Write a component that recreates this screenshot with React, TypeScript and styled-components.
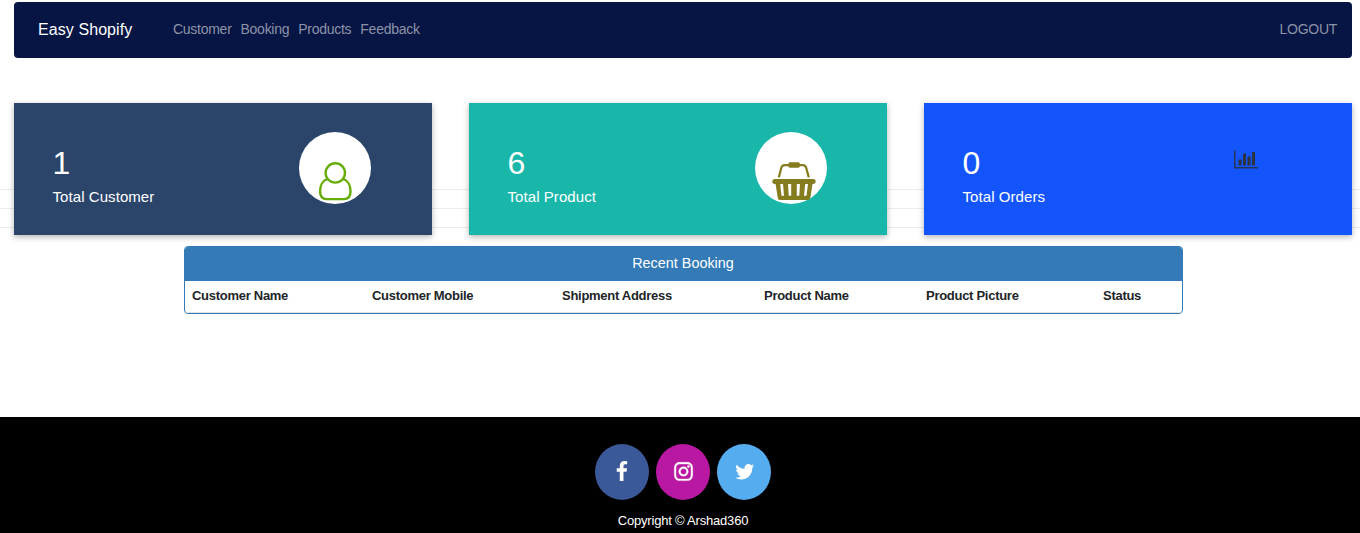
import React from "react";
import styled, { createGlobalStyle } from "styled-components";
import { FaInstagram } from "react-icons/fa";

const GlobalStyle = createGlobalStyle`
  *, *::before, *::after { box-sizing: border-box; }
  body {
    margin: 0;
    background: #fff;
    font-family: "Liberation Sans", Arial, sans-serif;
    color: #212529;
    overflow: hidden;
  }
`;

const Page = styled.div`
  height: 533px;
  display: flex;
  flex-direction: column;
  padding-top: 2px;
`;

const Navbar = styled.nav`
  flex: none;
  height: 56px;
  margin: 0 8px 0 14px;
  padding: 0 15px 0 24px;
  display: flex;
  align-items: center;
  background: #061543;
  border-radius: 4px;
`;

const Brand = styled.a`
  width: 135px;
  font-size: 16px;
  line-height: 24px;
  letter-spacing: 0.08px;
  color: #fff;
`;

const NavLinks = styled.div`
  flex: 1;
  display: flex;
  gap: 9px;
`;

const NavLink = styled.a`
  font-size: 14px;
  line-height: 20px;
  margin-top: -2px;
  letter-spacing: -0.27px;
  color: #8c93a8;
`;

const Stats = styled.section`
  flex: none;
  display: grid;
  margin-top: 45px;
  height: 132px;
`;

const Rules = styled.div`
  grid-area: 1 / 1;
  padding-top: 86px;
  display: flex;
  flex-direction: column;
  gap: 18px;
`;

const Rule = styled.div`
  height: 1px;
  background: #ececec;
`;

const Cards = styled.div`
  grid-area: 1 / 1;
  z-index: 1;
  display: grid;
  grid-template-columns: 418px 418px 428px;
  column-gap: 37px;
  margin-left: 14px;
`;

const Card = styled.article<{ $color: string }>`
  display: flex;
  justify-content: space-between;
  padding: 29px 61px 0 38.5px;
  background: ${(p) => p.$color};
  box-shadow: 0 2px 6px rgba(0, 0, 0, 0.3);
  color: #fff;
`;

const Figures = styled.div`
  padding-top: 11px;
`;

const Count = styled.div`
  font-size: 32px;
  line-height: 40px;
`;

const Label = styled.div`
  margin-top: 3px;
  font-size: 15px;
  line-height: 22px;
  letter-spacing: 0.07px;
`;

const Disc = styled.div<{ $shift?: number; $nudge?: number }>`
  width: 72px;
  height: 72px;
  margin-right: ${(p) => -(p.$shift ?? 0)}px;
  border-radius: 50%;
  background: #fff;
  display: flex;
  justify-content: center;
  padding: 30px 0 0 ${(p) => p.$nudge ?? 0}px;
  svg { display: block; flex: none; overflow: visible; }
`;

const ChartSlot = styled.div`
  padding: 17px 33px 0 0;
  svg { display: block; }
`;

const Panel = styled.section`
  flex: none;
  width: 999px;
  height: 68px;
  margin: 11px 0 0 184px;
  border: 1px solid #337ab7;
  border-radius: 4px;
  overflow: hidden;
`;

const PanelTitle = styled.h2`
  margin: 0;
  padding-right: 1px;
  height: 34px;
  background: #337ab7;
  color: #fff;
  font-size: 14.4px;
  font-weight: 400;
  line-height: 32px;
  text-align: center;
`;

const Table = styled.table`
  width: 997px;
  height: 32px;
  table-layout: fixed;
  border-collapse: collapse;
`;

const Th = styled.th<{ $w: number }>`
  width: ${(p) => p.$w}px;
  padding: 0 0 1px 7px;
  border-bottom: 1px solid #dee2e6;
  text-align: left;
  font-size: 13px;
  line-height: 18px;
  letter-spacing: -0.28px;
  white-space: nowrap;
`;

const Footer = styled.footer`
  flex: 1;
  margin-top: 103px;
  padding: 27px 0 0 6px;
  background: #000;
  display: flex;
  flex-direction: column;
  align-items: center;
`;

const Socials = styled.div`
  display: flex;
  gap: 7px;
`;

const Social = styled.a<{ $color: string; $nudge?: number }>`
  width: 54px;
  height: 56px;
  border-radius: 50%;
  background: ${(p) => p.$color};
  color: #fff;
  display: flex;
  align-items: center;
  justify-content: center;
  padding: 0 0 1px ${(p) => p.$nudge ?? 0}px;
`;

const InstagramIcon = styled(FaInstagram)`
  stroke: #fff;
  stroke-width: 10px;
`;

const Copyright = styled.p`
  margin: 12px 0 0;
  color: #fff;
  font-size: 13px;
  line-height: 18px;
  letter-spacing: -0.2px;
`;

const UserIcon = () => (
  <svg width="33" height="39" viewBox="0 0 33 39" fill="none" stroke="#66ad0a" strokeWidth="2.4">
    <circle cx="16.3" cy="10.9" r="9.7" />
    <path d="M8.4 17.2C3.7 18.4 1.1 23.4 1.1 29.4C1.1 34.6 3.4 37.1 7.6 37.1H25C29.2 37.1 31.5 34.6 31.5 29.4C31.5 23.4 28.9 18.4 24.2 17.2" />
  </svg>
);

const BasketIcon = () => (
  <svg width="44" height="39" viewBox="0 0 44 39">
    <path d="M6.8 15.4L9.3 5.8Q10 3.1 12.7 3.1H30.8Q33.5 3.1 34.2 5.8L36.8 15.4" fill="none" stroke="#857b1f" strokeWidth="2.2" />
    <rect x="16.3" y="0.2" width="11.6" height="5.6" rx="1.8" fill="#857b1f" />
    <path
      fillRule="evenodd"
      fill="#857b1f"
      d="M2.5 17H41.2Q43.7 17 43.7 19.5Q43.7 21.9 41.2 22H40.5L38.3 36Q38 38 36 38H8Q6 38 5.8 36L3.6 22H2.5Q.2 21.9.2 19.5Q.2 17 2.5 17ZM8.2 22L9.5 33.8H12L11 22ZM16 22L16.7 33.8H19.2V22ZM24.8 22V33.8H27.3L28 22ZM33.2 22L32 33.8H34.5L36 22Z"
    />
  </svg>
);

const ChartIcon = () => (
  <svg width="24" height="21" viewBox="0 0 2048 1792" fill="#253557">
    <path d="M0 128h128v1408h1920v128H0z" />
    <path fill="#2b3440" d="M640 896v512H384V896zM1024 384v1024H768V384zM1408 640v768h-256V640zM1792 256v1152h-256V256z" />
  </svg>
);

const FacebookIcon = () => (
  <svg width="21.5" height="21.5" viewBox="0 0 1792 1792" fill="currentColor">
    <path d="M1343 12v264h-157q-86 0-116 36t-30 108v189h293l-39 296h-254v759h-306v-759h-255v-296h255v-218q0-186 104-288.5t277-102.5q147 0 228 12z" />
  </svg>
);

const TwitterIcon = () => (
  <svg width="21.5" height="21.5" viewBox="0 0 1792 1792" fill="currentColor">
    <path d="M1684 408q-67 98-162 167 1 14 1 42 0 130-38 259.5t-115.5 248.5-184.5 210.5-258 146-323 54.5q-271 0-496-145 35 4 78 4 225 0 401-138-105-2-188-64.5t-114-159.5q33 5 61 5 43 0 85-11-112-23-185.5-111.5t-73.5-205.5v-4q68 38 146 41-66-44-105-115t-39-154q0-88 44-163 121 149 294.5 238.5t371.5 99.5q-8-38-8-74 0-134 94.5-228.5t228.5-94.5q140 0 236 102 109-21 205-78-37 115-142 178 93-10 186-50z" />
  </svg>
);

const columns: [string, number][] = [
  ["Customer Name", 180],
  ["Customer Mobile", 190],
  ["Shipment Address", 202],
  ["Product Name", 162],
  ["Product Picture", 177],
  ["Status", 86],
];

export default function App() {
  return (
    <Page>
      <GlobalStyle />
      <Navbar>
        <Brand>Easy Shopify</Brand>
        <NavLinks>
          {["Customer", "Booking", "Products", "Feedback"].map((name) => (
            <NavLink key={name}>{name}</NavLink>
          ))}
        </NavLinks>
        <NavLink>LOGOUT</NavLink>
      </Navbar>

      <Stats>
        <Rules>
          <Rule />
          <Rule />
          <Rule />
        </Rules>
        <Cards>
          <Card $color="#2b456a">
            <Figures>
              <Count>1</Count>
              <Label>Total Customer</Label>
            </Figures>
            <Disc><UserIcon /></Disc>
          </Card>
          <Card $color="#19b7aa">
            <Figures>
              <Count>6</Count>
              <Label>Total Product</Label>
            </Figures>
            <Disc $shift={1} $nudge={6}><BasketIcon /></Disc>
          </Card>
          <Card $color="#1455fb">
            <Figures>
              <Count>0</Count>
              <Label>Total Orders</Label>
            </Figures>
            <ChartSlot><ChartIcon /></ChartSlot>
          </Card>
        </Cards>
      </Stats>

      <Panel>
        <PanelTitle>Recent Booking</PanelTitle>
        <Table>
          <thead>
            <tr>
              {columns.map(([name, width]) => (
                <Th key={name} $w={width}>{name}</Th>
              ))}
            </tr>
          </thead>
        </Table>
      </Panel>

      <Footer>
        <Socials>
          <Social $color="#3b5998"><FacebookIcon /></Social>
          <Social $color="#b918a3"><InstagramIcon size={21} /></Social>
          <Social $color="#55acee" $nudge={2}><TwitterIcon /></Social>
        </Socials>
        <Copyright>Copyright © Arshad360</Copyright>
      </Footer>
    </Page>
  );
}
